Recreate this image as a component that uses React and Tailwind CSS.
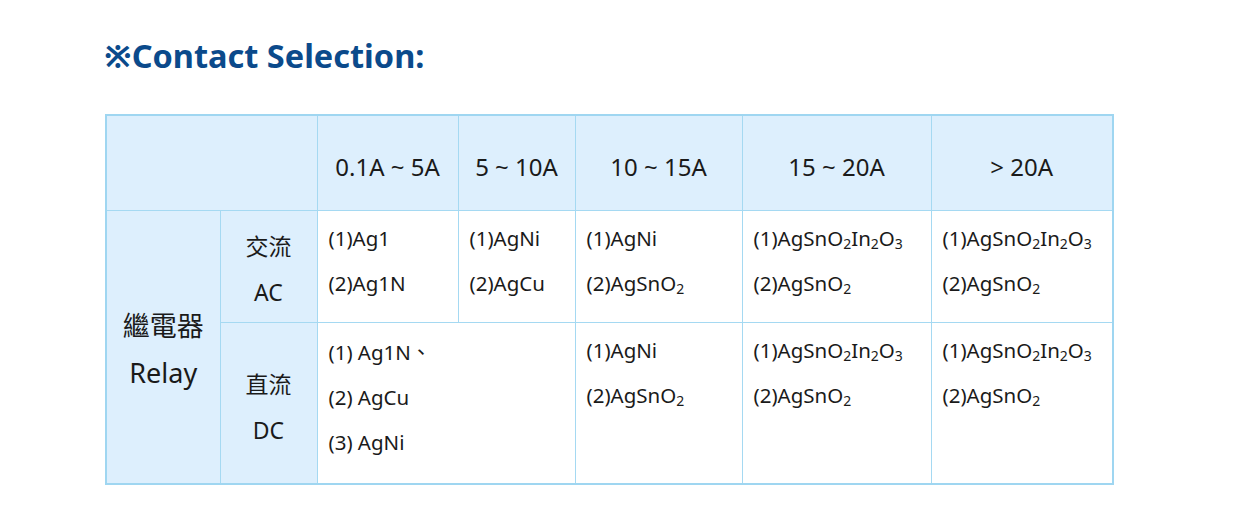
import React from "react";

// Header ranges for the contact material table
const ranges = ["0.1A ~ 5A", "5 ~ 10A", "10 ~ 15A", "15 ~ 20A", "> 20A"];

// Small helper for chemical subscripts
const Sub = ({ children }) => <sub className="text-[14px]">{children}</sub>;

const SnO2 = () => (
  <>
    AgSnO<Sub>2</Sub>
  </>
);

const SnO2In2O3 = () => (
  <>
    AgSnO<Sub>2</Sub>In<Sub>2</Sub>O<Sub>3</Sub>
  </>
);

const headCell = "border border-[#a5d9f2] bg-[#ddeffd] text-center align-middle pt-[8px] text-[24px] font-normal";
const labelCell = "border border-[#a5d9f2] bg-[#ddeffd] text-center align-middle";
const dataCell = "border border-[#a5d9f2] bg-white align-top pl-[11px] pt-[5px] text-[20.5px] leading-[45px]";

const App = () => {
  return (
    <div className="w-[1241px] h-[522px] bg-white pl-[104px] pt-[36px] text-[#1a1a1a] font-['Noto_Sans','Noto_Sans_CJK_TC',sans-serif]">
      {/* Title */}
      <h2 className="text-[32.5px] leading-[40px] font-bold text-[#0b4a8b]">※Contact Selection:</h2>

      {/* Contact selection table */}
      <table className="mt-[38px] ml-[1px] w-[1007px] table-fixed border-collapse border-2 border-[#9fd6f1]">
        <colgroup>
          <col className="w-[114px]" />
          <col className="w-[97px]" />
          <col className="w-[141px]" />
          <col className="w-[117px]" />
          <col className="w-[167px]" />
          <col className="w-[189px]" />
          <col className="w-[182px]" />
        </colgroup>
        <thead>
          <tr className="h-[95px]">
            <th colSpan={2} className={headCell}></th>
            {ranges.map((r) => (
              <th key={r} className={headCell}>
                {r}
              </th>
            ))}
          </tr>
        </thead>
        <tbody>
          <tr className="h-[112px]">
            <td rowSpan={2} className={labelCell + " pt-[4px] text-[27px] leading-[47px]"}>
              <div>繼電器</div>
              <div>Relay</div>
            </td>
            <td className={labelCell + " pt-[6px] text-[23px] leading-[46px]"}>
              <div>交流</div>
              <div>AC</div>
            </td>
            <td className={dataCell}>
              <div>(1)Ag1</div>
              <div>(2)Ag1N</div>
            </td>
            <td className={dataCell}>
              <div>(1)AgNi</div>
              <div>(2)AgCu</div>
            </td>
            <td className={dataCell}>
              <div>(1)AgNi</div>
              <div>(2)<SnO2 /></div>
            </td>
            <td className={dataCell}>
              <div>(1)<SnO2In2O3 /></div>
              <div>(2)<SnO2 /></div>
            </td>
            <td className={dataCell}>
              <div>(1)<SnO2In2O3 /></div>
              <div>(2)<SnO2 /></div>
            </td>
          </tr>
          <tr className="h-[162px]">
            <td className={labelCell + " pt-[8px] text-[23px] leading-[46px]"}>
              <div>直流</div>
              <div>DC</div>
            </td>
            <td colSpan={2} className={dataCell + " pt-[7px]"}>
              <div>(1) Ag1N、</div>
              <div>(2) AgCu</div>
              <div>(3) AgNi</div>
            </td>
            <td className={dataCell}>
              <div>(1)AgNi</div>
              <div>(2)<SnO2 /></div>
            </td>
            <td className={dataCell}>
              <div>(1)<SnO2In2O3 /></div>
              <div>(2)<SnO2 /></div>
            </td>
            <td className={dataCell}>
              <div>(1)<SnO2In2O3 /></div>
              <div>(2)<SnO2 /></div>
            </td>
          </tr>
        </tbody>
      </table>
    </div>
  );
};

export default App;
